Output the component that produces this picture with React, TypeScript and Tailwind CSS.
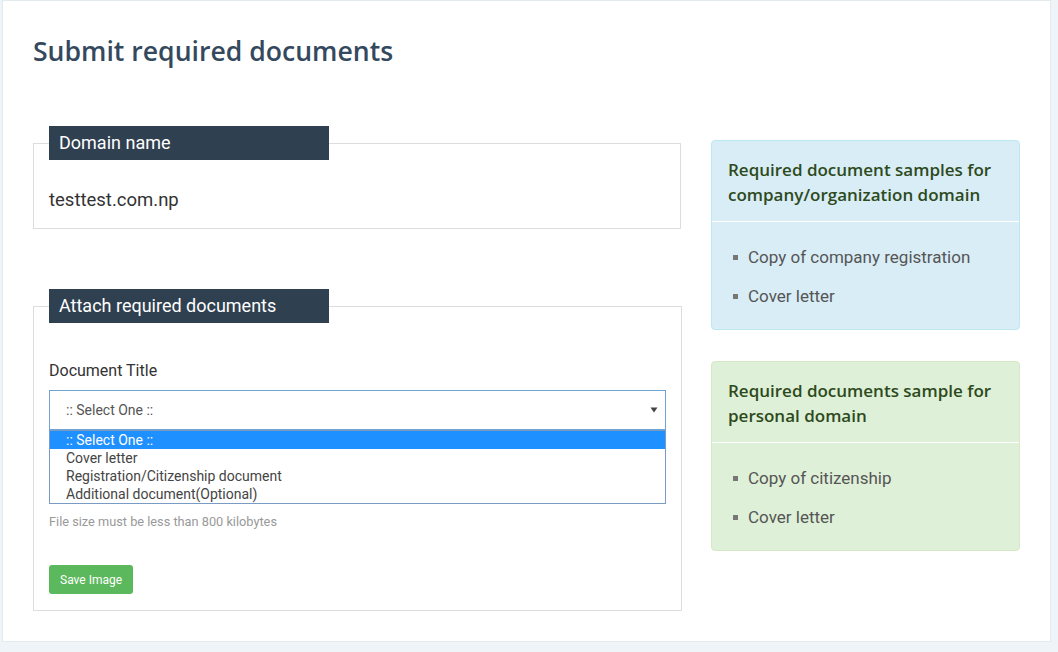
const heading = "font-['Open_Sans','Liberation_Sans',sans-serif]";

const Panel = ({
  title,
  items,
  tone,
}: {
  title: string[];
  items: string[];
  tone: "info" | "success";
}) => {
  const box =
    tone === "info"
      ? "bg-[#d9edf7] border-[#bce8f1]"
      : "bg-[#dff0d8] border-[#d6e9c6]";
  return (
    <div className={`border rounded-[4px] h-[190px] ${box}`}>
      <div className="h-[81px] px-[16px] pt-[16px] border-b border-white">
        <h3 className={`${heading} text-[17px] leading-[25px] font-semibold text-[#2d4a1c]`}>
          {title.map((t) => (
            <div key={t}>{t}</div>
          ))}
        </h3>
      </div>
      <ul className="pt-[25px] pl-[21px] flex flex-col gap-[18px]">
        {items.map((it) => (
          <li key={it} className="flex items-center gap-[10px] text-[17px] leading-[21px] text-[#555]">
            <span className="w-[5px] h-[5px] bg-[#777] shrink-0" />
            {it}
          </li>
        ))}
      </ul>
    </div>
  );
};

const options = [
  ":: Select One ::",
  "Cover letter",
  "Registration/Citizenship document",
  "Additional document(Optional)",
];

export default function App() {
  return (
    <div className="min-h-[652px] bg-[#eef4f7] pl-[2px] pr-[7px] pb-[10px] font-['Roboto','Liberation_Sans',sans-serif]">
      <div className="h-[642px] bg-white border border-[#e2eaee] px-[30px]">
        <h1 className={`${heading} text-[26.6px] leading-[32px] font-semibold text-[#34495e] pt-[34px]`}>
          Submit required documents
        </h1>
        <div className="flex mt-[59px] gap-[30px]">
          <div className="w-[648px]">
            <fieldset className="border border-[#ddd] px-[15px] pb-[16px]">
              <legend className="bg-[#2f4050] text-white w-[280px] h-[34px] px-[10px] text-[18px] leading-[34px]">
                Domain name
              </legend>
              <div className="pt-[28px] text-[18.5px] leading-[24px] text-[#333]">testtest.com.np</div>
            </fieldset>

            <fieldset className="border border-[#ddd] px-[15px] pb-[16px] mt-[60px]">
              <legend className="bg-[#2f4050] text-white w-[280px] h-[34px] px-[10px] text-[18px] leading-[34px]">
                Attach required documents
              </legend>
              <label className="block pt-[38px] text-[16px] leading-[20px] text-[#333]">Document Title</label>
              <div className="mt-[9px]">
                <div className="h-[40px] border border-[#6fa3d2] flex items-center pr-[7px] text-[14px] text-[#555]">
                  <span className="ml-[16px] flex-1">:: Select One ::</span>
                  <svg width="8" height="6" viewBox="0 0 8 6">
                    <path d="M0.5 0.5 L7.5 0.5 L4 5.5 Z" fill="#444" />
                  </svg>
                </div>
                <div className="border border-[#7a9cc4] w-[617px] text-[14px] leading-[18px] text-[#444]">
                  {options.map((o, i) => (
                    <div
                      key={o}
                      className={i === 0 ? "bg-[#1e90ff] text-white pl-[16px]" : "pl-[16px]"}
                    >
                      {o}
                    </div>
                  ))}
                </div>
              </div>
              <p className="mt-[10px] text-[12.75px] leading-[16px] text-[#999]">
                File size must be less than 800 kilobytes
              </p>
              <button className="mt-[35px] bg-[#5cb85c] text-white text-[12px] h-[29px] px-[11px] rounded-[3px]">
                Save Image
              </button>
            </fieldset>
          </div>
          <div className="w-[310px] flex flex-col gap-[31px] pt-[14px]">
            <Panel
              tone="info"
              title={["Required document samples for", "company/organization domain"]}
              items={["Copy of company registration", "Cover letter"]}
            />
            <Panel
              tone="success"
              title={["Required documents sample for", "personal domain"]}
              items={["Copy of citizenship", "Cover letter"]}
            />
          </div>
        </div>
      </div>
    </div>
  );
}
